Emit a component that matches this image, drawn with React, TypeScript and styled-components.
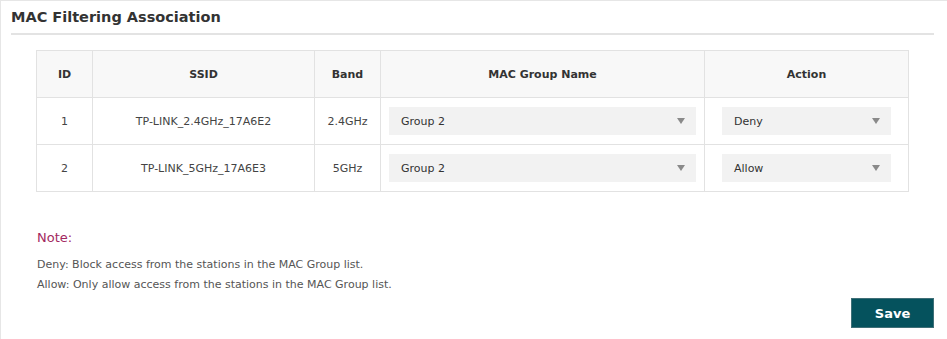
import React from "react";
import styled, { createGlobalStyle } from "styled-components";

const GlobalStyle = createGlobalStyle`
  html, body {
    margin: 0;
    padding: 0;
    background: #fff;
  }
  body {
    font-family: "DejaVu Sans", Verdana, sans-serif;
    color: #333;
  }
`;

type Row = { id: number; ssid: string; band: string; group: string; action: string };

const rows: Row[] = [
  { id: 1, ssid: "TP-LINK_2.4GHz_17A6E2", band: "2.4GHz", group: "Group 2", action: "Deny" },
  { id: 2, ssid: "TP-LINK_5GHz_17A6E3", band: "5GHz", group: "Group 2", action: "Allow" },
];

function Select({ value, wide }: { value: string; wide?: boolean }) {
  return (
    <SelectBox $wide={wide}>
      <span>{value}</span>
      <Caret />
    </SelectBox>
  );
}

export default function App() {
  return (
    <>
      <GlobalStyle />
      <Panel>
        <Title>MAC Filtering Association</Title>
        <Body>
          <Table>
            <colgroup>
              <col style={{ width: 56 }} />
              <col style={{ width: 222 }} />
              <col style={{ width: 66 }} />
              <col style={{ width: 324 }} />
              <col style={{ width: 204 }} />
            </colgroup>
            <thead>
              <tr>
                <Th>ID</Th>
                <Th>SSID</Th>
                <Th>Band</Th>
                <Th>MAC Group Name</Th>
                <Th>Action</Th>
              </tr>
            </thead>
            <tbody>
              {rows.map((r) => (
                <tr key={r.id}>
                  <Td>{r.id}</Td>
                  <Td>{r.ssid}</Td>
                  <Td>{r.band}</Td>
                  <SelectCell>
                    <Select value={r.group} wide />
                  </SelectCell>
                  <SelectCell>
                    <Select value={r.action} />
                  </SelectCell>
                </tr>
              ))}
            </tbody>
          </Table>

          <Notes>
            <NoteTitle>Note:</NoteTitle>
            <NoteLine>Deny: Block access from the stations in the MAC Group list.</NoteLine>
            <NoteLine>Allow: Only allow access from the stations in the MAC Group list.</NoteLine>
          </Notes>
        </Body>
        <Footer>
          <SaveButton>Save</SaveButton>
        </Footer>
      </Panel>
    </>
  );
}

const Panel = styled.div`
  width: 947px;
  height: 339px;
  box-sizing: border-box;
  border-left: 1px solid #e6e6e6;
  border-top: 1px solid #e6e6e6;
  padding: 0 13px 0 10px;
  display: flex;
  flex-direction: column;
`;

const Title = styled.h2`
  margin: 0;
  padding: 8px 0 8px 0;
  font-size: 14.5px;
  font-weight: bold;
  color: #333;
  border-bottom: 2px solid #e3e3e3;
  line-height: 16px;
`;

const Body = styled.div`
  padding: 15px 25px 0 25px;
`;

const Table = styled.table`
  border-collapse: collapse;
  width: 872px;
  table-layout: fixed;
  border: 1px solid #e2e2e2;
`;

const Th = styled.th`
  height: 46px;
  padding: 0;
  background: #f8f8f8;
  border: 1px solid #e2e2e2;
  font-size: 11px;
  font-weight: bold;
  color: #333;
  text-align: center;
`;

const Td = styled.td`
  height: 46px;
  padding: 0;
  border: 1px solid #e2e2e2;
  font-size: 11px;
  color: #444;
  text-align: center;
`;

const SelectCell = styled(Td)`
  padding: 0 8px;
`;

const SelectBox = styled.div<{ $wide?: boolean }>`
  box-sizing: border-box;
  height: 28px;
  width: ${(p) => (p.$wide ? "100%" : "169px")};
  margin: 0 auto;
  padding: 0 11px 0 12px;
  background: #f2f2f2;
  display: flex;
  align-items: center;
  justify-content: space-between;
  font-size: 11px;
  color: #333;
  text-align: left;
`;

const Caret = styled.span`
  width: 0;
  height: 0;
  border-left: 4px solid transparent;
  border-right: 4px solid transparent;
  border-top: 6px solid #8a8a8a;
`;

const Notes = styled.div`
  padding-top: 37px;
  padding-left: 1px;
`;

const NoteTitle = styled.div`
  font-size: 13px;
  color: #a3295f;
  line-height: 18px;
  margin-bottom: 8px;
`;

const NoteLine = styled.div`
  font-size: 11px;
  color: #555;
  line-height: 20px;
`;

const Footer = styled.div`
  display: flex;
  justify-content: flex-end;
  margin-top: 3px;
`;

const SaveButton = styled.button`
  width: 83px;
  height: 30px;
  border: 1px solid #3f6f77;
  background: #05525d;
  color: #fff;
  font-family: "DejaVu Sans", Verdana, sans-serif;
  font-size: 13px;
  font-weight: bold;
  cursor: pointer;
`;
